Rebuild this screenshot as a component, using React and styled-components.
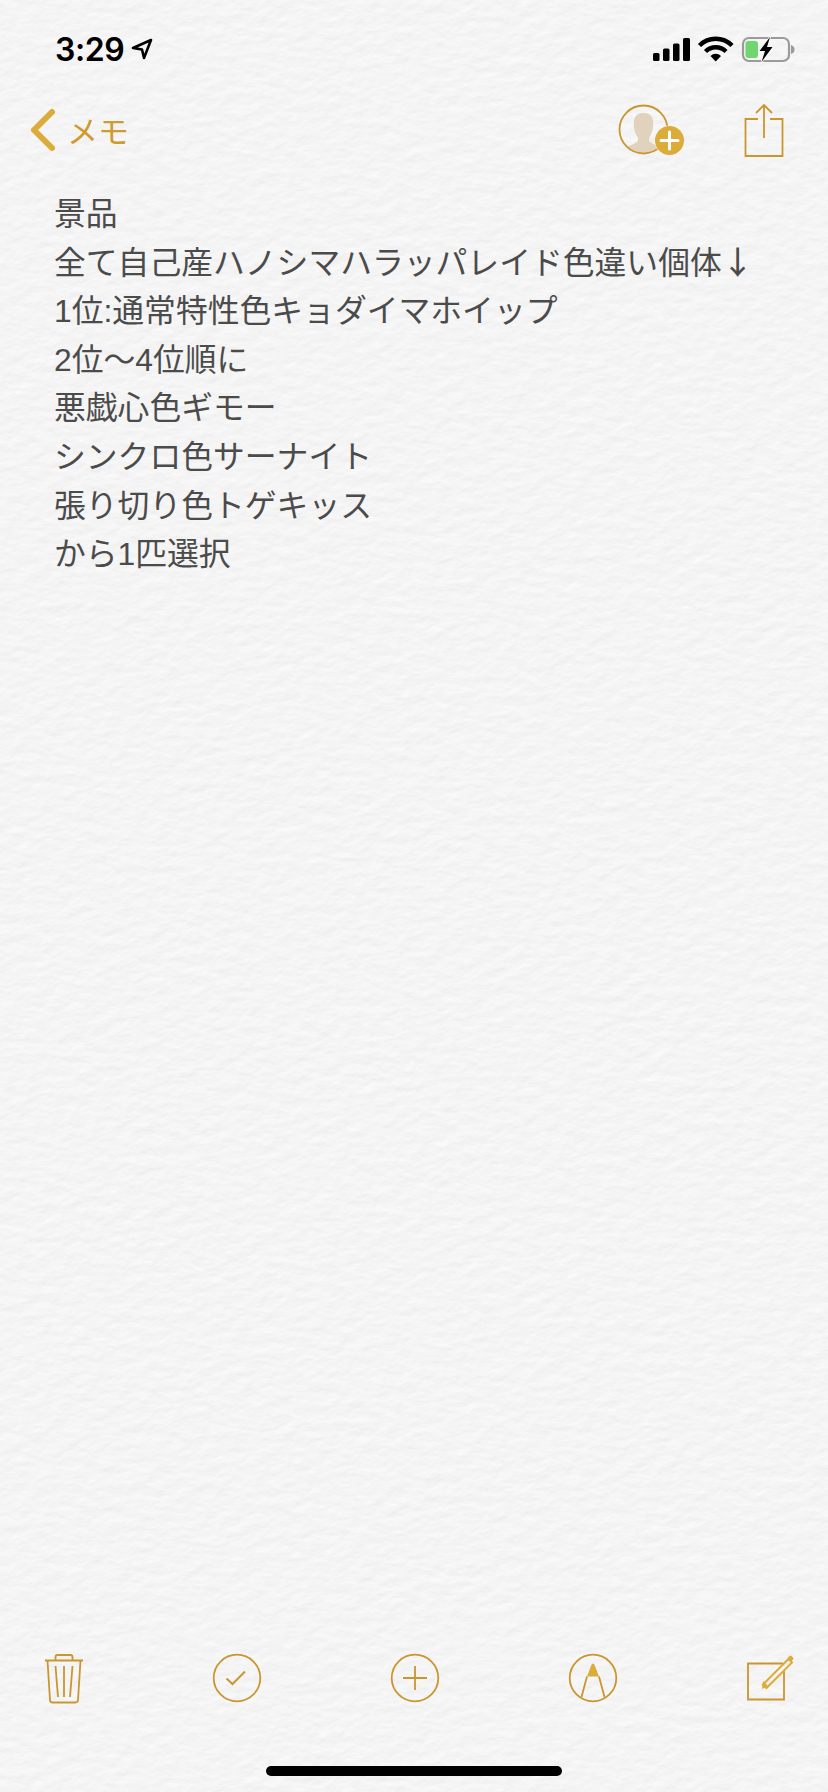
import React from "react";
import styled, { createGlobalStyle } from "styled-components";

const Global = createGlobalStyle`
  html, body { margin: 0; padding: 0; background: #f6f6f6; }
  #root { width: 828px; }
`;

const Page = styled.div`
  position: relative;
  width: 828px;
  height: 1792px;
  overflow: hidden;
  display: flex;
  flex-direction: column;
  background: #f6f6f6;
  font-family: "Noto Sans CJK JP", "Liberation Sans", sans-serif;
`;

const PaperTexture = styled.svg`
  position: absolute;
  inset: 0;
  width: 828px;
  height: 1792px;
  pointer-events: none;
`;

const Layer = styled.div`
  position: relative;
  display: flex;
  flex-direction: column;
  flex: 1;
`;

const StatusBar = styled.header`
  height: 100px;
  display: flex;
  align-items: flex-start;
  justify-content: space-between;
  padding: 29px 0 0 55px;
  box-sizing: border-box;
`;

const TimeGroup = styled.div`
  display: flex;
  align-items: center;
  gap: 7px;
  height: 40px;
`;

const Time = styled.span`
  font-family: "Inter", "Liberation Sans", sans-serif;
  font-size: 32px;
  font-weight: 600;
  letter-spacing: -0.4px;
  color: #000;
`;

const StatusIcons = styled.svg`
  display: block;
  margin-top: 4px;
`;

const NavBar = styled.nav`
  height: 60px;
  display: flex;
  align-items: center;
  justify-content: space-between;
  padding: 0 44px 0 28px;
`;

const BackLink = styled.div`
  display: flex;
  align-items: center;
  gap: 9px;
`;

const BackLabel = styled.span`
  font-size: 31px;
  font-weight: 400;
  line-height: 40px;
  color: #cf9a2e;
`;

const NavActions = styled.div`
  display: flex;
  align-items: center;
  gap: 58px;
`;

const Note = styled.main`
  flex: 1;
  padding: 30px 0 0 54px;
`;

const NoteLine = styled.div`
  font-family: "Liberation Sans", "Noto Sans CJK JP", sans-serif;
  font-size: 31.8px;
  font-weight: 400;
  line-height: 48.6px;
  height: 48.6px;
  color: #4b4b4b;
  white-space: nowrap;
`;

const ArrowGlyph = styled.span`
  font-family: "Noto Sans CJK JP", sans-serif;
  font-weight: 500;
  line-height: 0;
`;

const ToolBar = styled.footer`
  display: grid;
  grid-template-columns: 173px 178px 178px 177px 50px;
  padding-left: 39px;
  height: 54px;
  align-items: center;
`;

const HomeArea = styled.div`
  height: 87px;
  display: flex;
  justify-content: center;
  padding-top: 61px;
  box-sizing: border-box;
`;

const HomeBar = styled.div`
  width: 296px;
  height: 10px;
  border-radius: 5px;
  background: #000;
`;

const gold = "#c99630";

const Texture = () => (
  <PaperTexture aria-hidden="true">
    <filter id="paper" x="0" y="0" width="100%" height="100%" colorInterpolationFilters="sRGB">
      <feTurbulence type="fractalNoise" baseFrequency="0.06 0.1" numOctaves="4" seed="7" />
      <feDiffuseLighting surfaceScale="0.26" diffuseConstant="1.02" lightingColor="#ffffff">
        <feDistantLight azimuth="70" elevation="70" />
      </feDiffuseLighting>
    </filter>
    <rect width="828" height="1792" filter="url(#paper)" />
  </PaperTexture>
);

const LocationArrow = () => (
  <svg width="22" height="22" viewBox="0 0 22 22">
    <path d="M20 2 L2 10 L11 11.5 L13 20 Z" fill="none" stroke="#000" strokeWidth="2.6" strokeLinejoin="round" />
  </svg>
);

const StatusGlyphs = () => (
  <StatusIcons width="180" height="36" viewBox="648 33 180 36">
    <rect x="653" y="53" width="6.5" height="8" rx="1.5" fill="#000" />
    <rect x="663" y="48.5" width="6.5" height="12.5" rx="1.5" fill="#000" />
    <rect x="673" y="43.5" width="6.5" height="17.5" rx="1.5" fill="#000" />
    <rect x="683" y="38" width="7" height="23" rx="1.5" fill="#000" />
    <path d="M699.5 45.5 A23 23 0 0 1 732 45.5" fill="none" stroke="#000" strokeWidth="4.4" />
    <path d="M705.5 51.5 A14.5 14.5 0 0 1 726 51.5" fill="none" stroke="#000" strokeWidth="4.4" />
    <path d="M710.5 56 L715.7 61.5 L721 56 A7.5 7.5 0 0 0 710.5 56 Z" fill="#000" />
    <rect x="743" y="38" width="46" height="23" rx="6" fill="none" stroke="#9b9b9b" strokeWidth="2.2" />
    <rect x="745.5" y="41" width="12.5" height="17" rx="3" fill="#70d46f" />
    <path d="M791 45 Q794.5 46 794.5 49.5 Q794.5 53 791 54 Z" fill="#9b9b9b" />
    <path d="M770 37 L759.5 51 L765 51 L761.5 62 L772.5 47 L767 47 Z" fill="#000" stroke="#f6f6f6" strokeWidth="1.6" paintOrder="stroke" />
  </StatusIcons>
);

const Chevron = () => (
  <svg width="30" height="46" viewBox="0 0 30 46">
    <path d="M24 5 L6 23 L24 41" fill="none" stroke="#dcac3a" strokeWidth="6" strokeLinecap="round" strokeLinejoin="round" />
  </svg>
);

const AddContact = () => (
  <svg width="68" height="54" viewBox="618 104 68 54">
    <defs>
      <clipPath id="contactClip"><circle cx="643.5" cy="130.5" r="23" /></clipPath>
    </defs>
    <path
      clipPath="url(#contactClip)"
      d="M643.5 114 C635 114 633 120 634 128 C634.5 133 636 136 638 138.5 L638 142 C634 146 627 147 622 150 L622 158 L668 158 L668 150 C660 147 653 146 649 142 L649 138.5 C651 136 652.5 133 653 128 C654 120 652 114 643.5 114 Z"
      fill="#e0d2bd"
    />
    <circle cx="643.5" cy="130.5" r="24" fill="none" stroke={gold} strokeWidth="1.8" />
    <circle cx="669.5" cy="141.5" r="15" fill="#f6f6f6" />
    <circle cx="669.5" cy="141.5" r="14.5" fill="#dcac3a" />
    <path d="M669.5 133 V150 M661 141.5 H678" stroke="#fff" strokeWidth="3" strokeLinecap="round" />
  </svg>
);

const ShareIcon = () => (
  <svg width="40" height="56" viewBox="744 101 40 56">
    <path d="M758 118 H745.5 V155 H782.5 V118 H770" fill="none" stroke={gold} strokeWidth="1.8" />
    <path d="M764 104 V137 M756 112 L764 104 L772 112" fill="none" stroke={gold} strokeWidth="1.8" />
  </svg>
);

const TrashIcon = () => (
  <svg width="50" height="52" viewBox="39 1652 50 52">
    <g fill="none" stroke={gold} strokeWidth="1.8">
      <path d="M45 1660.5 H83" />
      <path d="M47.5 1660.5 L50 1700 Q50.2 1702.5 52.5 1702.5 H75.5 Q77.8 1702.5 78 1700 L80.5 1660.5" />
      <path d="M55.5 1660 V1657 Q55.5 1655 57.5 1655 H70.5 Q72.5 1655 72.5 1657 V1660" />
      <path d="M55.5 1666 L58 1697 M64 1666 V1697 M72.5 1666 L70 1697" />
    </g>
  </svg>
);

const CheckIcon = () => (
  <svg width="50" height="50" viewBox="0 0 50 50">
    <circle cx="25" cy="25" r="23.3" fill="none" stroke={gold} strokeWidth="1.8" />
    <path d="M14.5 25.5 L20.5 31 L33 18.5" fill="none" stroke={gold} strokeWidth="2" />
  </svg>
);

const PlusIcon = () => (
  <svg width="50" height="50" viewBox="0 0 50 50">
    <circle cx="25" cy="25" r="23.3" fill="none" stroke={gold} strokeWidth="1.8" />
    <path d="M13 25 H37 M25 13 V37" fill="none" stroke={gold} strokeWidth="1.8" />
  </svg>
);

const MarkupIcon = () => (
  <svg width="50" height="50" viewBox="0 0 50 50">
    <circle cx="25" cy="25" r="23.3" fill="none" stroke={gold} strokeWidth="1.8" />
    <path d="M25 10.5 Q26.5 10.5 27 13 L31 23.5 H19 L23 13 Q23.5 10.5 25 10.5 Z" fill="#dcac3a" />
    <path d="M19 23.5 L13.5 44 M31 23.5 L36.5 44" fill="none" stroke={gold} strokeWidth="1.8" />
  </svg>
);

const ComposeIcon = () => (
  <svg width="50" height="50" viewBox="745 1654 50 50">
    <path d="M783 1664.5 H748 V1700.5 H784 V1672" fill="none" stroke={gold} strokeWidth="1.8" />
    <path d="M763 1685.5 L788.5 1660 L792 1663.5 L766.5 1689 Z" fill="none" stroke="#dcac3a" strokeWidth="2" />
    <path d="M763 1682 L768 1687 L762 1690 Z" fill="#dcac3a" />
    <path d="M787.5 1659 L789.5 1657 Q790.5 1656 791.5 1657 L793 1658.5 Q794 1659.5 793 1660.5 L791 1662.5 Z" fill="#dcac3a" />
  </svg>
);

const lines = [
  "景品",
  <>全て自己産ハノシマハラッパレイド色違い個体<ArrowGlyph>↓</ArrowGlyph></>,
  "1位:通常特性色キョダイマホイップ",
  "2位〜4位順に",
  "悪戯心色ギモー",
  "シンクロ色サーナイト",
  "張り切り色トゲキッス",
  "から1匹選択",
];

export default function App() {
  return (
    <Page>
      <Global />
      <Texture />
      <Layer>
        <StatusBar>
          <TimeGroup>
            <Time>3:29</Time>
            <LocationArrow />
          </TimeGroup>
          <StatusGlyphs />
        </StatusBar>
        <NavBar>
          <BackLink>
            <Chevron />
            <BackLabel>メモ</BackLabel>
          </BackLink>
          <NavActions>
            <AddContact />
            <ShareIcon />
          </NavActions>
        </NavBar>
        <Note>
          {lines.map((line, index) => (
            <NoteLine key={index}>{line}</NoteLine>
          ))}
        </Note>
        <ToolBar>
          <TrashIcon />
          <CheckIcon />
          <PlusIcon />
          <MarkupIcon />
          <ComposeIcon />
        </ToolBar>
        <HomeArea>
          <HomeBar />
        </HomeArea>
      </Layer>
    </Page>
  );
}
